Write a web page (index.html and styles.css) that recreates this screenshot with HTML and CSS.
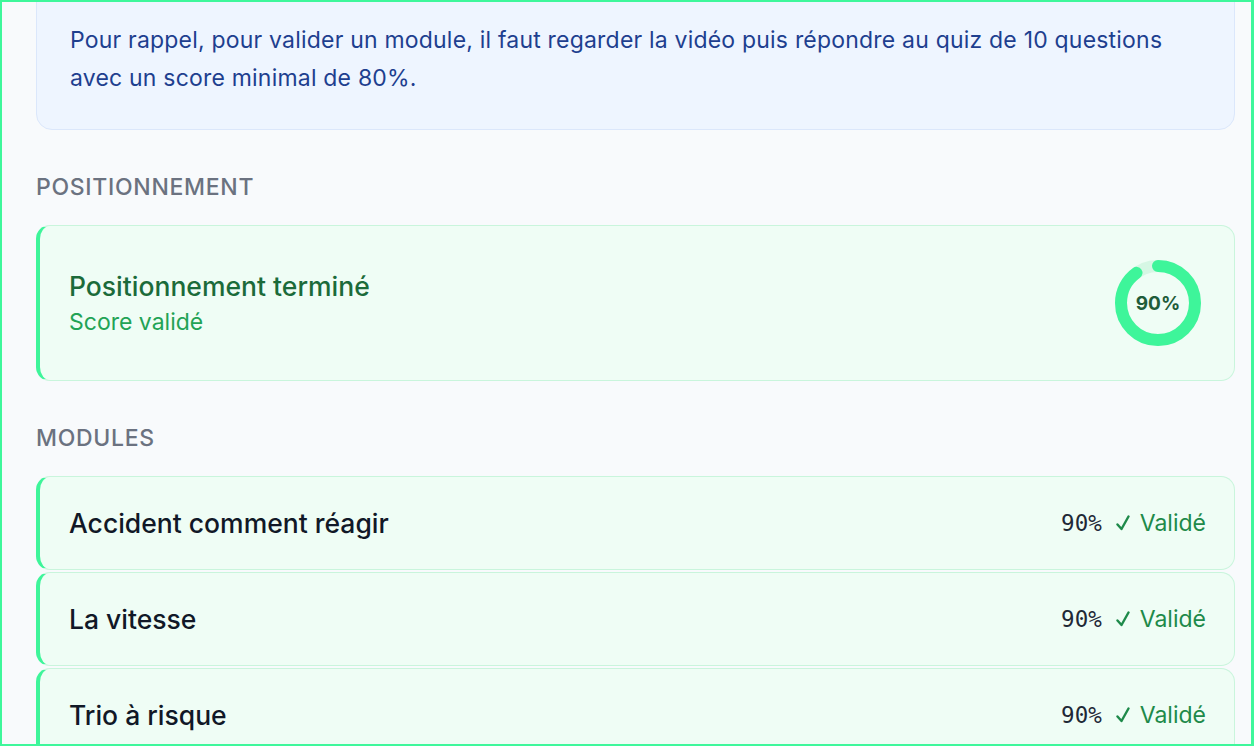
FILE: index.html
```html
<!DOCTYPE html>
<html lang="fr">
<head>
  <meta charset="UTF-8" />
  <meta name="viewport" content="width=device-width, initial-scale=1.0"/>
  <title>Ma formation</title>
  <link rel="stylesheet" href="styles.css">
</head>
<body>
  <main class="page">
    <div class="info-box">
      <p>Pour rappel, pour valider un module, il faut regarder la vidéo puis répondre au quiz de 10 questions avec un score minimal de 80%.</p>
    </div>

    <h2 class="section-title">Positionnement</h2>
    <div class="card card-position">
      <div class="position-text">
        <h3>Positionnement terminé</h3>
        <p>Score validé</p>
      </div>
      <div class="donut">
        <svg width="86" height="86" viewBox="0 0 86 86">
          <circle class="donut-track" cx="43" cy="43" r="37" />
          <circle class="donut-fill" cx="43" cy="43" r="37" stroke-dasharray="209.2 232.5" transform="rotate(-90 43 43)" />
        </svg>
        <span class="donut-label">90%</span>
      </div>
    </div>

    <h2 class="section-title">Modules</h2>
    <div class="module-list">
      <div class="card module">
        <span class="module-name">Accident comment réagir</span>
        <span class="module-status">
          <span class="score">90%</span>
          <span class="valid"><svg class="check" width="14" height="16" viewBox="0 0 14 16"><path d="M1.5 9.5 L5.5 14 L12.5 1.5" /></svg>Validé</span>
        </span>
      </div>
      <div class="card module">
        <span class="module-name">La vitesse</span>
        <span class="module-status">
          <span class="score">90%</span>
          <span class="valid"><svg class="check" width="14" height="16" viewBox="0 0 14 16"><path d="M1.5 9.5 L5.5 14 L12.5 1.5" /></svg>Validé</span>
        </span>
      </div>
      <div class="card module">
        <span class="module-name">Trio à risque</span>
        <span class="module-status">
          <span class="score">90%</span>
          <span class="valid"><svg class="check" width="14" height="16" viewBox="0 0 14 16"><path d="M1.5 9.5 L5.5 14 L12.5 1.5" /></svg>Validé</span>
        </span>
      </div>
    </div>
  </main>
</body>
</html>
```

FILE: styles.css
```css
html, body {
  height: 100%;
}
body {
  margin: 0;
  box-sizing: border-box;
  height: 100vh;
  overflow: hidden;
  border: 2px solid #3ef79b;
  border-right-width: 3px;
  background-color: #f8fafc;
  font-family: Inter, "Noto Sans", sans-serif;
  color: #111827;
}
.page {
  padding: 0 16px 0 34px;
}
.info-box {
  margin-top: -20px;
  padding: 38px 33px 32px;
  background: #eef5ff;
  border: 1px solid #dbe7fb;
  border-radius: 16px;
}
.info-box p {
  margin: 0;
  max-width: 1110px;
  font-size: 23px;
  line-height: 38px;
  letter-spacing: 0.2px;
  color: #1e3f8f;
}
.section-title {
  margin: 41px 0 22px;
  font-size: 23px;
  line-height: 32px;
  font-weight: 500;
  letter-spacing: 0.7px;
  text-transform: uppercase;
  color: #6b7280;
}
.card {
  display: flex;
  align-items: center;
  justify-content: space-between;
  background: #effdf5;
  border: 1px solid #c9f5dc;
  border-left: 4px solid #3ef59a;
  border-radius: 14px;
}
.card-position {
  padding: 34px 33px 34px 29px;
}
.position-text h3 {
  margin: 0;
  font-size: 26.5px;
  line-height: 34px;
  font-weight: 500;
  color: #1b6b3a;
}
.position-text p {
  margin: 3px 0 0;
  font-size: 23px;
  line-height: 32px;
  color: #22a355;
}
.donut {
  position: relative;
  width: 86px;
  height: 86px;
}
.donut svg {
  display: block;
}
.donut-track {
  fill: none;
  stroke: #d6f7e4;
  stroke-width: 12;
}
.donut-fill {
  fill: none;
  stroke: #3ef59a;
  stroke-width: 12;
  stroke-linecap: round;
}
.donut-label {
  position: absolute;
  inset: 0;
  display: flex;
  align-items: center;
  justify-content: center;
  font-size: 19px;
  font-weight: 700;
  color: #1f5c3a;
}
.module-list {
  display: flex;
  flex-direction: column;
  gap: 2px;
}
.module {
  padding: 30px 28px 30px 29px;
}
.module-name {
  font-size: 26.5px;
  line-height: 32px;
  font-weight: 500;
  color: #111827;
}
.module-status {
  display: flex;
  align-items: baseline;
  gap: 14px;
}
.score {
  font-family: "DejaVu Sans Mono", "Liberation Mono", monospace;
  font-size: 22.5px;
  color: #1f2937;
}
.valid {
  display: flex;
  align-items: center;
  gap: 10px;
  font-size: 23px;
  color: #1e8a4a;
}
.check path {
  fill: none;
  stroke: #1e8a4a;
  stroke-width: 2.4;
  stroke-linecap: round;
  stroke-linejoin: round;
}
```
